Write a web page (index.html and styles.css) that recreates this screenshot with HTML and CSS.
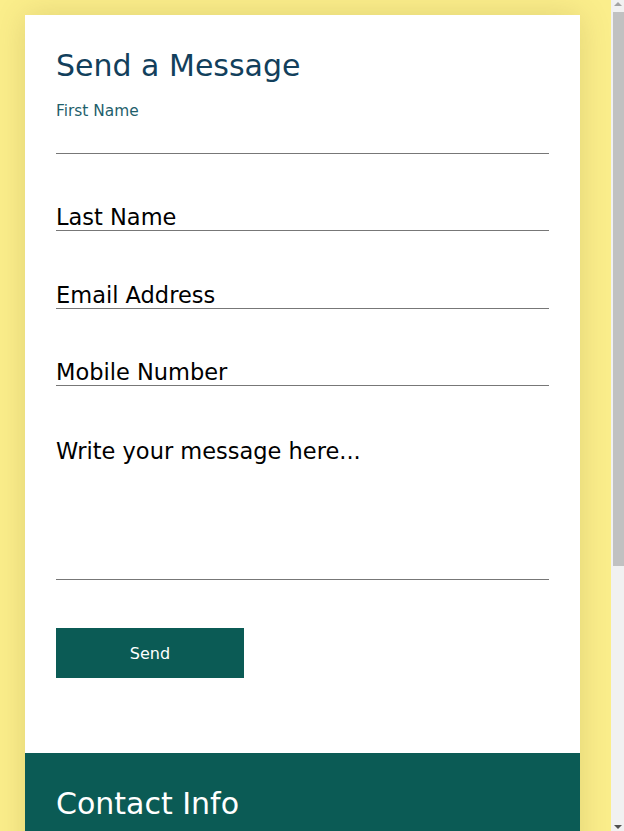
FILE: index.html
```html
<!DOCTYPE html>
<html lang="en">
<head>
<meta charset="utf-8">
<title>Contact</title>
<link rel="stylesheet" href="styles.css">
</head>
<body>
  <main class="card">
    <form class="form">
      <h2 class="title">Send a Message</h2>
      <div class="field">
        <label class="float-label" for="fname">First Name</label>
        <input class="input" id="fname" type="text">
      </div>
      <div class="field">
        <input class="input" type="text" placeholder="Last Name">
      </div>
      <div class="field">
        <input class="input" type="email" placeholder="Email Address">
      </div>
      <div class="field">
        <input class="input" type="tel" placeholder="Mobile Number">
      </div>
      <div class="field">
        <textarea class="input textarea" placeholder="Write your message here..."></textarea>
      </div>
      <button class="send" type="button">Send</button>
    </form>
    <section class="info">
      <h2 class="info-title">Contact Info</h2>
    </section>
  </main>
  <div class="fake-scrollbar" aria-hidden="true">
    <span class="sb-arrow sb-up"></span>
    <span class="sb-thumb"></span>
    <span class="sb-arrow sb-down"></span>
  </div>
</body>
</html>
```

FILE: styles.css
```css
html, body {
  margin: 0;
  padding: 0;
}
body {
  background: #fbee8b;
  font-family: "DejaVu Sans", Verdana, sans-serif;
  padding: 15px 0 40px 25px;
}
.card {
  width: 555px;
  background: #ffffff;
  box-shadow: 0 0 30px rgba(90, 70, 0, 0.16);
}
.form {
  padding: 34px 31px 75px 31px;
}
.title {
  margin: 0 0 19px 0;
  font-size: 30px;
  font-weight: normal;
  line-height: 34px;
  color: #123f5c;
}
.field {
  position: relative;
  padding-top: 25px;
  margin-bottom: 25.33px;
}
.float-label {
  position: absolute;
  top: 0;
  left: 0;
  font-size: 15.4px;
  line-height: 18px;
  color: #1f5f6c;
}
.input {
  display: block;
  width: 100%;
  box-sizing: border-box;
  height: 27px;
  margin: 0;
  padding: 0;
  border: none;
  border-bottom: 1px solid #777777;
  font-family: "DejaVu Sans", Verdana, sans-serif;
  font-size: 22.5px;
  color: #000;
  background: transparent;
  outline: none;
}
.input::placeholder {
  color: #000;
  opacity: 1;
}
.textarea {
  height: 144px;
  padding-top: 2px;
  resize: none;
  line-height: normal;
}
.send {
  display: block;
  margin-top: 48px;
  width: 188px;
  height: 50px;
  border: none;
  background: #0b5b55;
  color: #ffffff;
  font-family: "DejaVu Sans", Verdana, sans-serif;
  font-size: 16px;
  padding: 0;
}
.info {
  background: #0b5b55;
  color: #ffffff;
  padding: 33px 31px 60px 31px;
  min-height: 320px;
}
.info-title {
  margin: 0;
  font-size: 30px;
  font-weight: normal;
  line-height: 35px;
}
.fake-scrollbar {
  position: fixed;
  top: 0;
  right: 0;
  bottom: 0;
  width: 13px;
  background: #f1f1f1;
}
.sb-thumb {
  position: absolute;
  top: 12px;
  left: 2px;
  right: 0;
  height: 554px;
  background: #c1c1c1;
}
.sb-arrow {
  position: absolute;
  left: 3px;
  width: 0;
  height: 0;
  border-left: 4px solid transparent;
  border-right: 4px solid transparent;
}
.sb-up {
  top: 2px;
  border-bottom: 4px solid #a3a3a3;
}
.sb-down {
  bottom: 2px;
  border-top: 4px solid #505050;
}
```
